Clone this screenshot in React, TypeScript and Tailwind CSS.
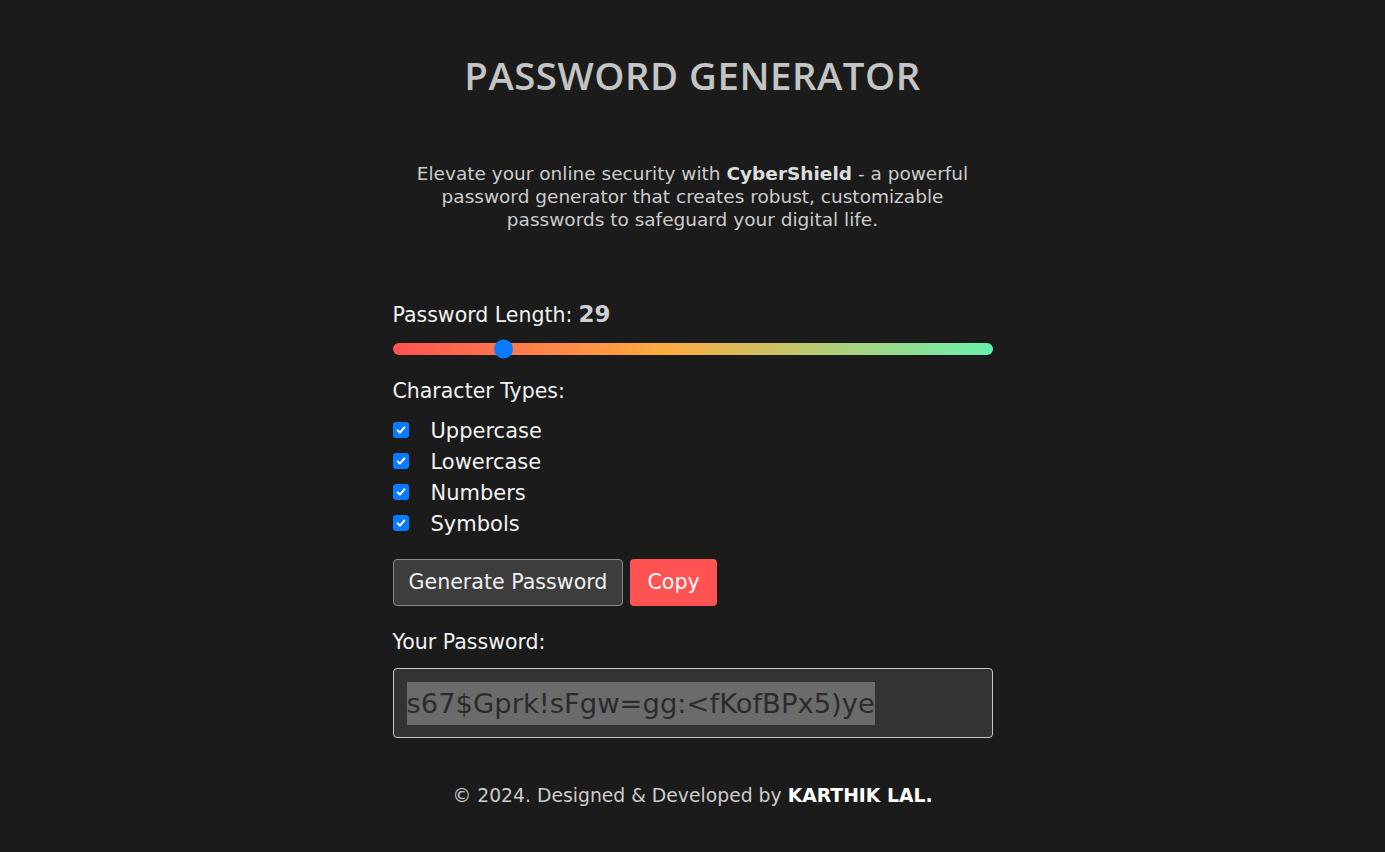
const types = ['Uppercase', 'Lowercase', 'Numbers', 'Symbols']

function Slider({ value, min, max }: { value: number; min: number; max: number }) {
  const pct = (value - min) / (max - min)
  return (
    <div className="relative h-[12px] w-full rounded-full bg-[linear-gradient(to_right,#ff5252,#ffab40_45%,#69f0ae)]">
      <div
        className="absolute top-1/2 h-[19px] w-[19px] -translate-y-1/2 rounded-full bg-[#0a7bff]"
        style={{ left: `calc(${pct} * (100% - 19px))` }}
      />
    </div>
  )
}

function Check() {
  return (
    <span className="flex h-[16px] w-[16px] items-center justify-center rounded-[3px] bg-[#0a7bff]">
      <svg viewBox="0 0 16 16" className="h-[12px] w-[12px]" fill="none" stroke="white" strokeWidth="2.6" strokeLinecap="round" strokeLinejoin="round">
        <path d="M3.5 8.5l3 3 6-7" />
      </svg>
    </span>
  )
}

export default function App() {
  return (
    <div className="min-h-[852px] bg-[#1b1b1b] font-['DejaVu_Sans',sans-serif] text-[#e6e6e6]">
      <div className="flex flex-col items-center pt-[51px]">
        <h1 className="font-['Open_Sans',sans-serif] text-[38.4px] font-semibold leading-[48px] tracking-[0.5px] text-[#c4c4c4]">PASSWORD GENERATOR</h1>
        <p className="mt-[63px] text-center text-[18.5px] leading-[23px] text-[#cccccc]">
          Elevate your online security with <b className="font-bold text-[#dddddd]">CyberShield</b> - a powerful
          <br />
          password generator that creates robust, customizable
          <br />
          passwords to safeguard your digital life.
        </p>

        <div className="mt-[70px] w-[600px]">
          <div className="flex items-end gap-[6px] text-[20.5px] leading-[24px] text-[#f2f2f2]">
            <span>Password Length:</span>
            <span className="text-[23px] font-bold leading-[26px] text-[#cfcfcf]">29</span>
          </div>
          <div className="mt-[16px]">
            <Slider value={29} min={8} max={128} />
          </div>

          <div className="mt-[24px] text-[20.5px] leading-[24px] text-[#f2f2f2]">Character Types:</div>
          <div className="mt-[15px] flex flex-col gap-[7px]">
            {types.map(t => (
              <label key={t} className="flex h-[24px] items-center text-[21px] text-[#f2f2f2]">
                <Check />
                <span className="ml-[22px] pt-[3px]">{t}</span>
              </label>
            ))}
          </div>

          <div className="mt-[24px] flex gap-[7px]">
            <button className="h-[47px] rounded-[4px] border border-[#8a8a8a] bg-[#3d3d3d] px-[15px] text-[20.6px] text-[#f0f0f0]">Generate Password</button>
            <button className="h-[47px] rounded-[4px] bg-[#ff5252] px-[17px] text-[20.6px] text-white">Copy</button>
          </div>

          <div className="mt-[24px] text-[20.5px] leading-[24px] text-[#f2f2f2]">Your Password:</div>
          <div className="mt-[14px] flex h-[70px] items-center rounded-[4px] border border-[#c8c8c8] bg-[#333333] px-[13px]">
            <span className="bg-[#6b6b6b] text-[27.4px] leading-[43px] text-[#2b2b2b]">s67$Gprk!sFgw=gg:&lt;fKofBPx5)ye</span>
          </div>
        </div>

        <footer className="mt-[44px] text-[18.8px] text-[#cccccc]">
          © 2024. Designed &amp; Developed by <span className="font-bold text-white">KARTHIK LAL.</span>
        </footer>
      </div>
    </div>
  )
}
